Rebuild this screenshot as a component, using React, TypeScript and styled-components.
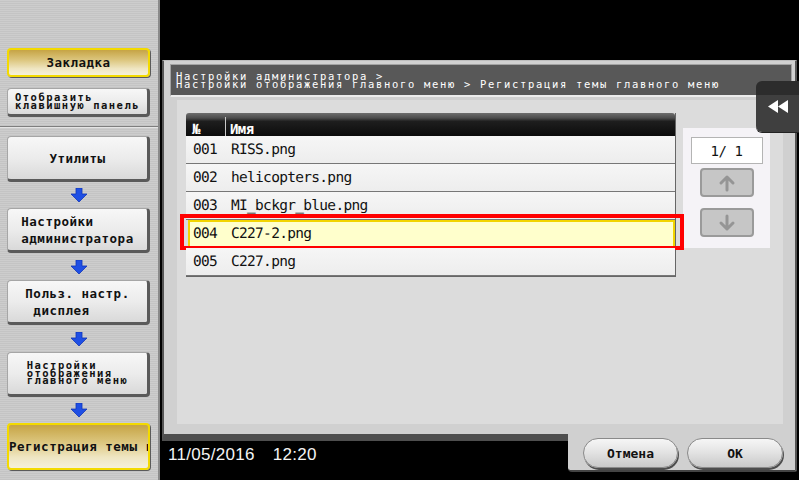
import React from "react";
import styled, { createGlobalStyle, css } from "styled-components";

const Global = createGlobalStyle`
  html, body { margin: 0; padding: 0; background: #000; }
  body { width: 799px; height: 480px; overflow: hidden; }
`;

const MONO = `"DejaVu Sans Mono", "Liberation Mono", monospace`;

const Screen = styled.div`
  position: relative;
  width: 799px;
  height: 480px;
  display: flex;
  background: #000;
  overflow: hidden;
`;

/* ---------- Sidebar ---------- */

const Sidebar = styled.div`
  box-sizing: border-box;
  width: 160px;
  height: 480px;
  flex-shrink: 0;
  display: flex;
  flex-direction: column;
  background: repeating-linear-gradient(to bottom, #cdcdcd 0 1px, #c4c4c4 1px 2px);
  border-right: 2px solid #8a8a8a;
`;

const SideTop = styled.div`
  display: flex;
  flex-direction: column;
  gap: 11px;
  padding: 48px 0 9px 7px;
`;

const SideSep = styled.div`
  height: 1px;
  background: #7e7e7e;
  border-bottom: 1px solid #e4e4e4;
`;

const SideFlow = styled.div`
  display: flex;
  flex-direction: column;
  padding: 8px 0 0 7px;
`;

const SideButton = styled.div<{ $h: number; $active?: boolean; $clip?: boolean }>`
  box-sizing: border-box;
  width: 143px;
  height: ${(p) => p.$h}px;
  flex-shrink: 0;
  border-radius: 4px;
  display: flex;
  align-items: center;
  justify-content: ${(p) => (p.$clip ? "flex-start" : "center")};
  overflow: hidden;
  white-space: pre;
  color: #111;
  font-family: ${MONO};
  font-weight: 700;
  ${(p) =>
    p.$active
      ? css`
          background: linear-gradient(#c6a445, #dcc67e 40%, #efe6c2 75%, #f5f0da);
          border: 2px solid #f3da00;
          box-shadow: 1px 1px 0 #5a5a5a;
        `
      : css`
          background: linear-gradient(#f7f7f7, #ececec 50%, #d9d9d9);
          border: 1px solid #a6a6a6;
          border-right: 3px solid #5a5a5a;
          border-bottom: 3px solid #5a5a5a;
        `}
`;

const BtnText = styled.span<{ $small?: boolean; $clip?: boolean }>`
  display: block;
  text-align: left;
  font-size: ${(p) => (p.$small ? "10.5px" : "12.5px")};
  letter-spacing: ${(p) => (p.$small ? "1.5px" : "0.5px")};
  line-height: ${(p) => (p.$small ? "7.5px" : "17px")};
  ${(p) =>
    p.$clip &&
    css`
      max-width: 100%;
      overflow: hidden;
      padding-left: 0;
    `}
`;

const ArrowRow = styled.div<{ $h: number }>`
  width: 143px;
  height: ${(p) => p.$h}px;
  display: flex;
  align-items: center;
  justify-content: center;
`;

const BlueArrow = () => (
  <svg width="16" height="14" viewBox="0 0 16 14">
    <path d="M5 0 H11 V6 H16 L8 14 L0 6 H5 Z" fill="#1f4fe4" stroke="#1035b8" strokeWidth="0.8" />
  </svg>
);

/* ---------- Main panel ---------- */

const Main = styled.div`
  flex: 1;
  display: flex;
  flex-direction: column;
`;

const TopGap = styled.div`
  height: 60px;
  flex-shrink: 0;
`;

const Panel = styled.div`
  box-sizing: border-box;
  margin-left: 2px;
  width: 635px;
  height: 364px;
  flex-shrink: 0;
  background: #d0d0d0;
  border-top: 1px solid #bdbdbd;
  border-left: 2px solid #555;
  border-right: 2px solid #555;
  padding: 3px 3px 0 6px;
  display: flex;
  flex-direction: column;
`;

const Header = styled.div`
  box-sizing: border-box;
  height: 33px;
  flex-shrink: 0;
  background: #585858;
  border: 1px solid #a2a2a2;
  border-bottom: 2px solid #ececec;
  padding: 7px 0 0 5px;
  color: #fff;
  font-family: ${MONO};
  font-size: 10.5px;
  line-height: 8px;
  letter-spacing: 1.68px;
  white-space: pre;
  overflow: hidden;
`;

const Inner = styled.div`
  flex: 1;
  margin: 3px 9px 0 7px;
  background: #dcdcdc;
  padding: 13px 0 0 9px;
  display: flex;
  align-items: flex-start;
`;

const Table = styled.div`
  box-sizing: border-box;
  width: 490px;
  display: flex;
  flex-direction: column;
  border-right: 1px solid #666;
  border-bottom: 1px solid #666;
`;

const HeadRow = styled.div`
  height: 23px;
  display: flex;
  align-items: stretch;
  border-radius: 3px 3px 0 0;
  background: linear-gradient(#6e6e6e 0, #4c4c4c 22%, #1e1e1e 36%, #0c0c0c 100%);
  color: #fff;
  font-family: ${MONO};
  font-weight: 700;
  font-size: 14px;
  letter-spacing: -0.6px;
`;

const HeadNum = styled.div`
  box-sizing: border-box;
  width: 40px;
  padding: 5px 0 0 6px;
  border-right: 1px solid #c8c8c8;
  margin-top: 4px;
  line-height: 14px;
`;

const HeadName = styled.div`
  padding: 9px 0 0 4px;
  line-height: 14px;
`;

const Row = styled.div<{ $sel?: boolean }>`
  position: relative;
  box-sizing: border-box;
  height: 28px;
  display: flex;
  align-items: center;
  font-family: ${MONO};
  font-size: 14.5px;
  line-height: 20px;
  letter-spacing: -0.7px;
  text-rendering: geometricPrecision;
  color: #111;
  ${(p) =>
    p.$sel
      ? css`
          margin-left: 2px;
          background: #ffffcc;
          border: 2px solid #f2d400;
        `
      : css`
          background: linear-gradient(#f6f6f6, #ededed);
          border-bottom: 1px solid #777;
        `}
`;

const NumCell = styled.div<{ $sel?: boolean }>`
  box-sizing: border-box;
  width: ${(p) => (p.$sel ? 41 : 45)}px;
  padding-left: ${(p) => (p.$sel ? 3 : 7)}px;
  flex-shrink: 0;
`;

const NameCell = styled.div`
  flex: 1;
  white-space: pre;
`;

const RedMark = styled.div`
  position: absolute;
  top: -8px;
  left: -10px;
  right: -11px;
  bottom: -4px;
  border: 4px solid #ff0000;
  pointer-events: none;
`;

const Pager = styled.div`
  box-sizing: border-box;
  margin: 15px 0 0 7px;
  width: 87px;
  height: 120px;
  background: #f5f3f7;
  display: flex;
  flex-direction: column;
  align-items: center;
  padding-top: 9px;
`;

const PageBox = styled.div`
  box-sizing: border-box;
  width: 72px;
  height: 27px;
  background: #fff;
  border: 1px solid #b4b4b4;
  display: flex;
  align-items: center;
  justify-content: center;
  font-family: ${MONO};
  font-size: 14px;
  letter-spacing: -0.4px;
  color: #111;
  white-space: pre;
`;

const PageBtn = styled.div<{ $gap: number }>`
  box-sizing: border-box;
  margin-top: ${(p) => p.$gap}px;
  width: 54px;
  height: 29px;
  border-radius: 4px;
  background: #c6c6c6;
  border: 2px solid #9a9a9a;
  display: flex;
  align-items: center;
  justify-content: center;
`;

const PageArrow = ({ down }: { down?: boolean }) => (
  <svg width="18" height="18" viewBox="0 0 18 18" style={down ? { transform: "rotate(180deg)" } : undefined}>
    <path d="M9 16 V3 M3 9 L9 3 L15 9" fill="none" stroke="#959595" strokeWidth="3" strokeLinecap="round" strokeLinejoin="round" />
  </svg>
);

const SideTab = styled.div`
  position: absolute;
  right: 0;
  top: 81px;
  width: 43px;
  height: 51px;
  border-radius: 6px 0 0 6px;
  background: linear-gradient(#2c2c2c 0 27%, #3f3f3f 27%);
  box-shadow: 0 1px 0 #222;
  display: flex;
  align-items: flex-start;
  padding: 19px 0 0 12px;
  box-sizing: border-box;
`;

const TabIcon = () => (
  <svg width="20" height="13" viewBox="0 0 20 13">
    <polygon points="10,0 10,13 0,6.5" fill="#fff" />
    <polygon points="20,0 20,13 10,6.5" fill="#fff" />
  </svg>
);

/* ---------- Footer ---------- */

const Footer = styled.div`
  height: 48px;
  display: flex;
  flex-shrink: 0;
`;

const FootLeft = styled.div`
  flex: 1;
  display: flex;
  flex-direction: column;
`;

const Lip = styled.div`
  margin-left: 2px;
  height: 10px;
  background: #d0d0d0;
  border-left: 2px solid #555;
  border-bottom: 7px solid #4e4e4e;
`;

const DateLine = styled.div`
  margin: 5px 0 0 8px;
  display: flex;
  gap: 18px;
  font-family: "Liberation Sans", Arial, sans-serif;
  font-size: 17px;
  line-height: 18px;
  letter-spacing: 0.3px;
  color: #f4f4f4;
`;

const Tray = styled.div`
  box-sizing: border-box;
  width: 229px;
  margin-right: 2px;
  background: #d0d0d0;
  border-right: 2px solid #555;
  border-bottom: 2px solid #444;
  border-radius: 0 0 2px 4px;
  padding: 14px 0 0 15px;
  display: flex;
  gap: 9px;
  align-items: flex-start;
`;

const Pill = styled.div<{ $w: number }>`
  box-sizing: border-box;
  width: ${(p) => p.$w}px;
  height: 30px;
  border-radius: 15px;
  background: linear-gradient(#f6f6f6, #e4e4e4 45%, #c9c9c9);
  border: 1px solid #8a8a8a;
  box-shadow: 1px 2px 0 #4d4d4d;
  display: flex;
  align-items: center;
  justify-content: center;
  font-family: ${MONO};
  font-weight: 700;
  font-size: 13px;
  color: #111;
`;

const files = [
  { n: "001", name: "RISS.png" },
  { n: "002", name: "helicopters.png" },
  { n: "003", name: "MI_bckgr_blue.png" },
  { n: "004", name: "C227-2.png", sel: true },
  { n: "005", name: "C227.png" },
];

export default function App() {
  return (
    <>
      <Global />
      <Screen>
        <Sidebar>
          <SideTop>
            <SideButton $h={29} $active>
              <BtnText>Закладка</BtnText>
            </SideButton>
            <SideButton $h={29}>
              <BtnText $small>{"Отобразить\nклавишную панель"}</BtnText>
            </SideButton>
          </SideTop>
          <SideSep />
          <SideFlow>
            <SideButton $h={46}>
              <BtnText>Утилиты</BtnText>
            </SideButton>
            <ArrowRow $h={26}>
              <BlueArrow />
            </ArrowRow>
            <SideButton $h={45}>
              <BtnText>{"Настройки\nадминистратора"}</BtnText>
            </SideButton>
            <ArrowRow $h={27}>
              <BlueArrow />
            </ArrowRow>
            <SideButton $h={45}>
              <BtnText>{"Польз. настр.\n дисплея"}</BtnText>
            </SideButton>
            <ArrowRow $h={27}>
              <BlueArrow />
            </ArrowRow>
            <SideButton $h={45}>
              <BtnText $small>{"Настройки\nотображения\nглавного меню"}</BtnText>
            </SideButton>
            <ArrowRow $h={26}>
              <BlueArrow />
            </ArrowRow>
            <SideButton $h={47} $active $clip>
              <BtnText $clip>Регистрация темы главного меню</BtnText>
            </SideButton>
          </SideFlow>
        </Sidebar>

        <Main>
          <TopGap />
          <Panel>
            <Header>
              {"Настройки администратора >\nНастройки отображения главного меню > Регистрация темы главного меню"}
            </Header>
            <Inner>
              <Table>
                <HeadRow>
                  <HeadNum>№</HeadNum>
                  <HeadName>Имя</HeadName>
                </HeadRow>
                {files.map((f) => (
                  <Row key={f.n} $sel={f.sel}>
                    <NumCell $sel={f.sel}>{f.n}</NumCell>
                    <NameCell>{f.name}</NameCell>
                    {f.sel && <RedMark />}
                  </Row>
                ))}
              </Table>
              <Pager>
                <PageBox>1/ 1</PageBox>
                <PageBtn $gap={4}>
                  <PageArrow />
                </PageBtn>
                <PageBtn $gap={11}>
                  <PageArrow down />
                </PageBtn>
              </Pager>
            </Inner>
          </Panel>
          <Footer>
            <FootLeft>
              <Lip />
              <DateLine>
                <span>11/05/2016</span>
                <span>12:20</span>
              </DateLine>
            </FootLeft>
            <Tray>
              <Pill $w={95}>Отмена</Pill>
              <Pill $w={96}>ОК</Pill>
            </Tray>
          </Footer>
        </Main>

        <SideTab>
          <TabIcon />
        </SideTab>
      </Screen>
    </>
  );
}
